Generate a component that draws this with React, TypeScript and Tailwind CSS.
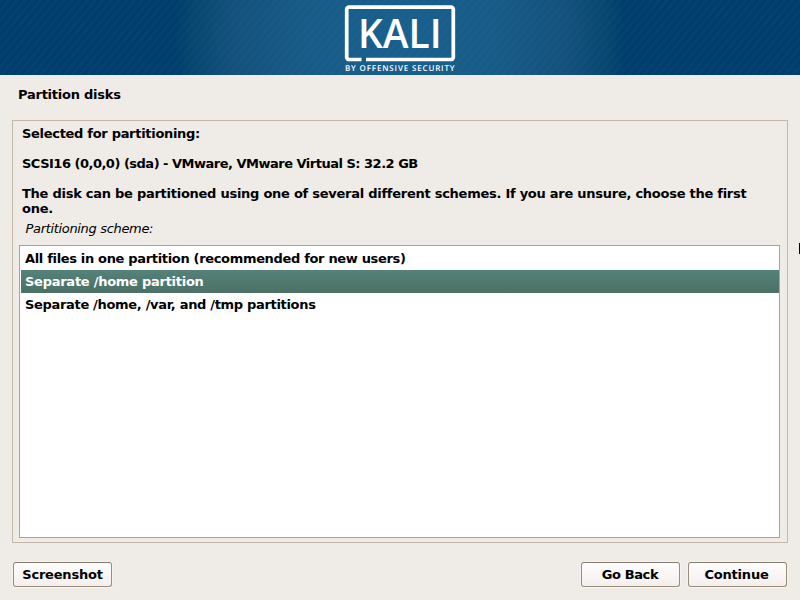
import type { ReactNode } from "react";

const schemes = [
  { label: "All files in one partition (recommended for new users)", tracking: "tracking-[-0.33px]" },
  { label: "Separate /home partition", tracking: "tracking-[-0.26px]" },
  { label: "Separate /home, /var, and /tmp partitions", tracking: "tracking-[-0.32px]" },
];

function Button({ children, className = "" }: { children: ReactNode; className?: string }) {
  return (
    <button
      className={`h-[25px] rounded-[3px] border border-[#9a8d7d] border-t-[#857b6c] bg-linear-to-b from-[#fefdfd] to-[#f4efed] text-center leading-[23px] font-bold whitespace-nowrap shadow-[0_0_0_1px_#f5f2ef] ${className}`}
    >
      {children}
    </button>
  );
}

function Banner() {
  return (
    <header className="h-[75px] shrink-0">
      <svg width="800" height="75" viewBox="0 0 800 75" className="block">
        <defs>
          <radialGradient id="glow" gradientUnits="userSpaceOnUse" cx="400" cy="38" r="225">
            <stop offset="0" stopColor="#195f8e" />
            <stop offset="0.45" stopColor="#185a87" />
            <stop offset="0.75" stopColor="#14507c" />
            <stop offset="0.92" stopColor="#07466e" />
            <stop offset="1" stopColor="#003d6c" />
          </radialGradient>
          <pattern id="stripes" width="6" height="10" patternUnits="userSpaceOnUse" patternTransform="rotate(40)">
            <rect width="2.6" height="10" fill="#2a8fa0" opacity="0.08" />
          </pattern>
        </defs>
        <rect width="800" height="75" fill="url(#glow)" />
        <rect width="800" height="75" fill="url(#stripes)" />
        <path
          d="M361.500 59.500H349a2.300 2.300 0 0 1-2.300-2.300V9.500a2.300 2.300 0 0 1 2.300-2.300h102a2.300 2.300 0 0 1 2.300 2.300V57.200a2.300 2.300 0 0 1-2.300 2.300H366"
          fill="none"
          stroke="#fff"
          strokeWidth="3.700"
        />
        <text
          x="358"
          y="48"
          fill="#fff"
          fontFamily="'Open Sans', sans-serif"
          fontSize="39"
          fontWeight="600"
          textLength="83.500"
          lengthAdjust="spacingAndGlyphs"
        >
          KALI
        </text>
        <text
          x="345"
          y="70.800"
          fill="#fff"
          fontFamily="'Open Sans', sans-serif"
          fontSize="8"
          fontWeight="600"
          textLength="109.500"
          lengthAdjust="spacing"
          textRendering="geometricPrecision"
        >
          BY OFFENSIVE SECURITY
        </text>
      </svg>
    </header>
  );
}

export default function App() {
  return (
    <div className="relative flex h-[600px] w-[800px] flex-col overflow-hidden bg-[#efebe7] font-['DejaVu_Sans',sans-serif] text-[13px] leading-[15px] text-black">
      <Banner />
      <h1 className="mt-3 ml-[18px] h-[15px] font-bold tracking-[-0.24px]">Partition disks</h1>
      <main className="mx-3 mt-[18px] flex h-[423px] flex-col border border-[#c5b7a6] px-[6px] pb-1">
        <div className="mt-[5px] ml-[3px] font-bold whitespace-nowrap">
          <p className="tracking-[-0.3px]">Selected for partitioning:</p>
          <p className="mt-[15px] tracking-[-0.5px]">SCSI16 (0,0,0) (sda) - VMware, VMware Virtual S: 32.2 GB</p>
          <p className="mt-[15px] tracking-[-0.26px]">
            The disk can be partitioned using one of several different schemes. If you are unsure, choose the first
            <br />
            one.
          </p>
        </div>
        <p className="mt-[5px] ml-[6.5px] tracking-[-0.33px] italic">Partitioning scheme:</p>
        <ul className="mt-[9px] mr-px flex-1 border border-[#b3a08c] bg-white py-px pl-px font-bold">
          {schemes.map(({ label, tracking }, i) => (
            <li
              key={label}
              className={`h-[23px] pl-1 leading-[23px] ${tracking} ${i === 1 ? "bg-linear-to-b from-[#54827a] to-[#4c7065] text-white" : ""}`}
            >
              {label}
            </li>
          ))}
        </ul>
      </main>
      <footer className="mx-[13px] mt-[19px] flex">
        <Button className="w-[99px] tracking-[-0.2px]">Screenshot</Button>
        <Button className="ml-auto w-[99px] pr-px tracking-[-0.4px]">Go Back</Button>
        <Button className="ml-2 w-[99px] pr-[2px] tracking-[-0.2px]">Continue</Button>
      </footer>
      <div className="absolute top-[243px] right-0 h-[11px] w-px bg-black" />
    </div>
  );
}
